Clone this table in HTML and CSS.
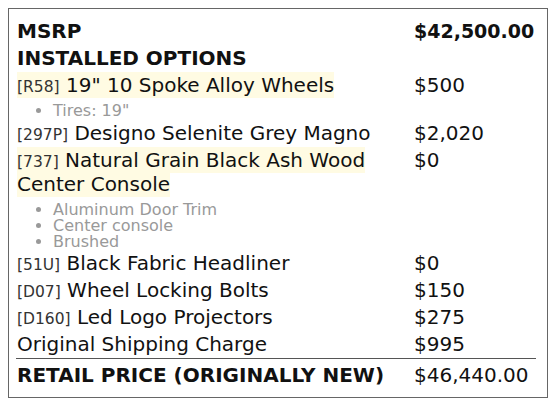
FILE: index.html
```html
<!DOCTYPE html>
<html>
<head>
<meta charset="utf-8">
<link rel="stylesheet" href="styles.css">
</head>
<body>
<div class="sticker">
  <div class="row head"><div class="label">MSRP</div><div class="price msrp">$42,500.00</div></div>
  <div class="row head"><div class="label">INSTALLED OPTIONS</div><div class="price"></div></div>
  <div class="row"><div class="label"><span class="hl"><span class="code">[R58]</span> 19" 10 Spoke Alloy Wheels</span></div><div class="price">$500</div></div>
  <ul class="details"><li>Tires: 19"</li></ul>
  <div class="row"><div class="label"><span class="code">[297P]</span> Designo Selenite Grey Magno</div><div class="price">$2,020</div></div>
  <div class="row"><div class="label"><span class="hl"><span class="code">[737]</span> Natural Grain Black Ash Wood Center Console</span></div><div class="price">$0</div></div>
  <ul class="details"><li>Aluminum Door Trim</li><li>Center console</li><li>Brushed</li></ul>
  <div class="row"><div class="label"><span class="code">[51U]</span> Black Fabric Headliner</div><div class="price">$0</div></div>
  <div class="row"><div class="label"><span class="code">[D07]</span> Wheel Locking Bolts</div><div class="price">$150</div></div>
  <div class="row"><div class="label"><span class="code">[D160]</span> Led Logo Projectors</div><div class="price">$275</div></div>
  <div class="row"><div class="label">Original Shipping Charge</div><div class="price">$995</div></div>
  <div class="row total"><div class="label">RETAIL PRICE (ORIGINALLY NEW)</div><div class="price">$46,440.00</div></div>
</div>
</body>
</html>
```
FILE: styles.css
```css
html, body {
  margin: 0;
  background: #fff;
}
body {
  padding: 8px;
  font-family: "DejaVu Sans", sans-serif;
  color: #111;
}
.sticker {
  width: 540px;
  height: 390px;
  box-sizing: border-box;
  border: 1px solid #666;
  padding: 8.5px 11px 9px 7px;
}
.row {
  display: grid;
  grid-template-columns: 397px 1fr;
  font-size: 20px;
  line-height: 24px;
  padding: 1.5px 0;
}
.label, .price {
  padding-left: 1px;
}
.head {
  font-weight: bold;
}
.msrp {
  font-size: 19px;
}
.code {
  font-size: 15.5px;
  line-height: 1;
  color: #333;
}
.hl {
  background: #fffbe3;
  padding: 1px 0;
}
.details {
  margin: 0;
  padding: 4.5px 0 0 37px;
  font-size: 16px;
  line-height: 16px;
  color: #999;
}
.total {
  border-top: 1px solid #555;
  padding-top: 4px;
}
.total .label {
  font-weight: bold;
}
```
